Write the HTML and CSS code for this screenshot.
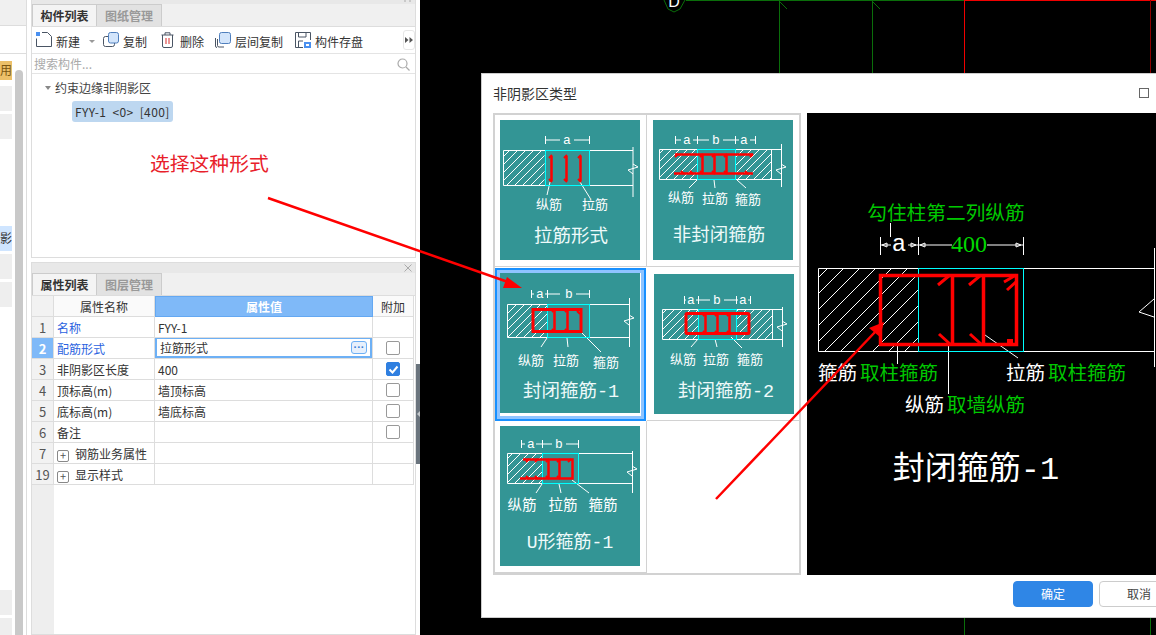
FILE: index.html
```html
<!DOCTYPE html>
<html lang="zh-CN">
<head>
<meta charset="utf-8">
<title>非阴影区类型</title>
<link rel="stylesheet" href="styles.css">
</head>
<body>
<aside class="side">
  <div class="side-head"></div>
  <div class="side-sub"></div>
  <div class="side-main">
    <div class="side-list">
      <div class="side-row side-orange"><span>用</span></div>
      <div class="side-row side-gray"></div>
      <div class="side-row side-gray"></div>
      <div class="side-row"></div>
      <div class="side-row"></div>
      <div class="side-row"></div>
      <div class="side-row side-blue"><span>影</span></div>
      <div class="side-row side-gray"></div>
      <div class="side-row side-gray"></div>
      <div class="side-spacer"></div>
      <div class="side-row side-gray"></div>
      <div class="side-row side-gray"></div>
    </div>
    <div class="side-scroll"></div>
  </div>
</aside>

<div class="panels">
  <section class="panel panel-list">
    <div class="strip strip-thin"><svg class="strip-pin" width="8" height="4" viewBox="0 0 8 4"><path class="strip-mark" d="M1 0V2M6 0V2"/></svg></div>
    <div class="tabs">
      <div class="tab tab-on">构件列表</div>
      <div class="tab">图纸管理</div>
    </div>
    <div class="toolbar">
      <div class="tool tool-new">
        <svg class="ic" width="16" height="16" viewBox="0 0 16 16"><rect class="ic-blue" x="0" y="0" width="4" height="4"/><path class="ic-line" d="M.5 6.5V14.500H15.500V4.500L11.500.5H6"/></svg>
        <span>新建</span><i class="caret"></i>
      </div>
      <div class="tool tool-copy">
        <svg class="ic" width="16" height="16" viewBox="0 0 16 16"><rect class="ic-line" x=".5" y="4.500" width="11" height="10" rx="2"/><rect class="ic-front" x="5.500" y=".5" width="10" height="10.500" rx="2"/></svg>
        <span>复制</span>
      </div>
      <div class="tool tool-del">
        <svg class="ic" width="13" height="16" viewBox="0 0 13 16"><path class="ic-line" d="M.5 3H12.500M4 3V.8H9V3M1.500 3V14a1.500 1.500 0 0 0 1.500 1.500H10A1.500 1.500 0 0 0 11.500 14V3"/><path class="ic-red" d="M5 6V12M8 6V12"/></svg>
        <span>删除</span>
      </div>
      <div class="tool tool-floor">
        <svg class="ic" width="16" height="16" viewBox="0 0 16 16"><path class="ic-line" d="M2.500 7V13.500A1.500 1.500 0 0 0 4 15H9M.5 6V14A1.500 1.500 0 0 0 2 15.500"/><rect class="ic-front" x="4.500" y=".5" width="11" height="11" rx="2"/></svg>
        <span>层间复制</span>
      </div>
      <div class="tool tool-save">
        <svg class="ic" width="16" height="16" viewBox="0 0 16 16"><path class="ic-line" d="M8 15.500H.5V.5H15.500V8M3.500 1V5H11V1M3.500 15V9H8"/><rect class="ic-blue" x="9" y="10" width="7" height="6"/><rect class="ic-white" x="11" y="12" width="3" height="2"/></svg>
        <span>构件存盘</span>
      </div>
      <div class="tool-more"><svg width="8" height="6" viewBox="0 0 8 6"><path class="more-tri" d="M0 0L3.500 3L0 6ZM4.500 0L8 3L4.500 6Z"/></svg></div>
    </div>
    <div class="search">
      <span>搜索构件...</span>
      <svg width="13" height="13" viewBox="0 0 13 13"><circle class="ic-search" cx="5.500" cy="5.500" r="4.500"/><path class="ic-search" d="M9 9L12.500 12.500"/></svg>
    </div>
    <div class="tree">
      <div class="tree-root"><i class="tree-arrow"></i>约束边缘非阴影区</div>
      <div class="tree-leaf">FYY-1 &lt;0&gt; [400]</div>
    </div>
  </section>

  <section class="panel panel-props">
    <div class="strip"><svg class="strip-x" width="8" height="8" viewBox="0 0 8 8"><path class="strip-mark" d="M.5 .5L7.500 7.500M7.500 .5L.5 7.500"/></svg></div>
    <div class="tabs">
      <div class="tab tab-on">属性列表</div>
      <div class="tab">图层管理</div>
    </div>
    <div class="grid-wrap">
      <table class="props">
        <colgroup><col class="c-n"><col class="c-name"><col class="c-val"><col class="c-add"></colgroup>
        <thead>
          <tr><th class="th-n"></th><th>属性名称</th><th class="th-on">属性值</th><th>附加</th></tr>
        </thead>
        <tbody>
          <tr><td class="n">1</td><td class="key">名称</td><td>FYY-1</td><td></td></tr>
          <tr><td class="n n-on">2</td><td class="key">配筋形式</td><td class="edit"><div class="edit-box"><span>拉筋形式</span><b class="more">···</b></div></td><td class="ck"><i class="box"></i></td></tr>
          <tr><td class="n">3</td><td>非阴影区长度</td><td>400</td><td class="ck"><i class="box box-on"><svg width="13" height="13" viewBox="0 0 13 13"><path class="tick" d="M2.500 6.500L5.500 9.500L10.500 3.500"/></svg></i></td></tr>
          <tr><td class="n">4</td><td>顶标高(m)</td><td>墙顶标高</td><td class="ck"><i class="box"></i></td></tr>
          <tr><td class="n">5</td><td>底标高(m)</td><td>墙底标高</td><td class="ck"><i class="box"></i></td></tr>
          <tr><td class="n">6</td><td>备注</td><td></td><td class="ck"><i class="box"></i></td></tr>
          <tr><td class="n">7</td><td><i class="plus">+</i>钢筋业务属性</td><td></td><td></td></tr>
          <tr><td class="n">19</td><td><i class="plus">+</i>显示样式</td><td></td><td></td></tr>
        </tbody>
      </table>
    </div>
  </section>
  <div class="splitter"><i></i></div>
</div>

<main class="canvas">
  <svg class="cad" width="736" height="635" viewBox="420 0 736 635">
    <path class="g" d="M686 .5H965M779.500 0V73M872.500 0V73M779 1L787 9M872 1L880 9M964.500 618V635M1150.500 618V635"/>
    <path class="g" d="M664 0L668 9L674 12L680 9L685 0"/>
    <path class="rl" d="M965 .5H1156M964.500 0V73"/>
    <path class="drl" d="M1150.500 0V73"/>
    <text class="cad-d" x="674" y="7" text-anchor="middle">D</text>
  </svg>

  <div class="dialog">
    <header class="dlg-head"><span>非阴影区类型</span><i class="dlg-max"></i></header>
    <div class="dlg-body">
      <div class="types">
        <div class="type">
          <svg class="thumb" width="140" height="140" viewBox="0 0 140 140">
            <defs><pattern id="h1" width="8" height="8" patternUnits="userSpaceOnUse"><path class="w" d="M0 8L8 0M-1 1L1-1M7 9L9 7"/></pattern></defs>
            <rect x="3.500" y="30.500" width="41" height="35" fill="url(#h1)"/>
            <path class="w" d="M3.500 30.500H133M3.500 65.500H133M3.500 30.500V65.500M133 27V77M133 44L138 47L128 50L133 54"/>
            <path class="w" d="M45.500 16V24M89.500 16V24M46 20H60M74 20H89M50 62L47 75M80 62L90 78"/>
            <rect class="c" x="45.500" y="30.500" width="44" height="35"/>
            <path class="r" d="M51.500 36V61M66.500 36V61M80.500 36V61"/>
            <path class="r2" d="M49 38L52 35M64 38L67 35M78 38L81 35M49 59L52 62M64 59L67 62M78 59L81 62"/>
            <text class="t-d" x="67" y="20">a</text>
            <text class="t-l" x="49" y="85">纵筋</text>
            <text class="t-l" x="95" y="85">拉筋</text>
            <text class="t-t" x="71" y="117">拉筋形式</text>
          </svg>
        </div>
        <div class="type">
          <svg class="thumb" width="140" height="140" viewBox="0 0 140 140">
            <defs><pattern id="h2" width="8" height="8" patternUnits="userSpaceOnUse"><path class="w" d="M0 8L8 0M-1 1L1-1M7 9L9 7"/></pattern></defs>
            <rect x="6.500" y="29.500" width="38" height="30" fill="url(#h2)"/>
            <rect x="82.500" y="29.500" width="36" height="30" fill="url(#h2)"/>
            <path class="w" d="M6.500 29.500H128M6.500 59.500H128M6.500 29.500V59.500M118.500 29.500V59.500M128.500 24V67M128 44L133 47L123 50L128 54"/>
            <path class="w" d="M22.500 16V24M44.500 16V24M82.500 16V24M102.500 16V24M23 20H28M40 20H56M70 20H86M97 20H102M44 60L36 68M61 60L62 68M84 60L93 68"/>
            <rect class="c" x="44.500" y="29.500" width="38" height="30"/>
            <path class="r" d="M22 34.500H100M21 53.500H100M49.500 34V54M61.500 34V54M73.500 34V54"/>
            <path class="r2" d="M22 37L25 34M47 37L50 34M59 37L62 34M71 37L74 34M28 51L31 54M37 51L40 54M47 51L50 54M59 51L62 54M71 51L74 54M92 51L95 54M97 37L100 34"/>
            <text class="t-d" x="34" y="20">a</text><text class="t-d" x="63" y="20">b</text><text class="t-d" x="91" y="20">a</text>
            <text class="t-l" x="28" y="78">纵筋</text>
            <text class="t-l" x="62" y="79">拉筋</text>
            <text class="t-l" x="95" y="80">箍筋</text>
            <text class="t-t" x="66" y="116">非封闭箍筋</text>
          </svg>
        </div>
        <div class="type type-on">
          <svg class="thumb" width="140" height="140" viewBox="0 0 140 140">
            <defs><pattern id="h3" width="8" height="8" patternUnits="userSpaceOnUse"><path class="w" d="M0 8L8 0M-1 1L1-1M7 9L9 7"/></pattern></defs>
            <rect x="7.500" y="31.500" width="40" height="33" fill="url(#h3)"/>
            <path class="w" d="M7.500 31.500H129M7.500 64.500H129M7.500 31.500V64.500M129.500 25V74M129 42L134 45L124 48L129 52"/>
            <path class="w" d="M31.500 17V25M47.500 17V25M89.500 17V25M32 21H34M45 21H60M76 21H89M47 65L41 74M67 65L68 74M82 60L101 79"/>
            <rect class="c" x="47.500" y="31.500" width="42" height="33"/>
            <rect class="r3" x="33" y="36.500" width="48" height="22"/>
            <path class="r" d="M54.500 37V59M67.500 37V59"/>
            <path class="r2" d="M52 39L55 36M65 39L68 36M77 38L80 41M52 56L55 59M65 56L68 59"/>
            <text class="t-d" x="40" y="21">a</text><text class="t-d" x="69" y="21">b</text>
            <text class="t-l" x="31" y="88">纵筋</text>
            <text class="t-l" x="66" y="88">拉筋</text>
            <text class="t-l" x="106" y="90">箍筋</text>
            <text class="t-t" x="71" y="119">封闭箍筋-1</text>
          </svg>
        </div>
        <div class="type type-alt">
          <svg class="thumb" width="140" height="140" viewBox="0 0 140 140">
            <defs><pattern id="h4" width="8" height="8" patternUnits="userSpaceOnUse"><path class="w" d="M0 8L8 0M-1 1L1-1M7 9L9 7"/></pattern></defs>
            <rect x="8.500" y="35.500" width="36" height="30" fill="url(#h4)"/>
            <rect x="82.500" y="35.500" width="36" height="30" fill="url(#h4)"/>
            <path class="w" d="M8.500 35.500H128M8.500 65.500H128M8.500 35.500V65.500M118.500 35.500V65.500M128.500 33V73M128 47L133 50L123 53L128 57"/>
            <path class="w" d="M30.500 22V30M44.500 22V30M82.500 22V30M96.500 22V30M31 26H32M42 26H56M70 26H84M94 26H96M44 65L37 73M61 65L63 73M77 63L88 74"/>
            <rect class="c" x="44.500" y="35.500" width="38" height="30"/>
            <rect class="r3" x="32" y="39.500" width="63" height="20" rx="1"/>
            <path class="r" d="M51.500 40V60M63.500 40V60M75.500 40V60"/>
            <path class="r2" d="M49 42L52 39M61 42L64 39M73 42L76 39M49 57L52 60M61 57L64 60M73 57L76 60"/>
            <text class="t-d" x="37" y="26">a</text><text class="t-d" x="63" y="26">b</text><text class="t-d" x="89" y="26">a</text>
            <text class="t-l" x="29" y="86">纵筋</text>
            <text class="t-l" x="62" y="86">拉筋</text>
            <text class="t-l" x="96" y="86">箍筋</text>
            <text class="t-t" x="72" y="118">封闭箍筋-2</text>
          </svg>
        </div>
        <div class="type">
          <svg class="thumb" width="140" height="140" viewBox="0 0 140 140">
            <defs><pattern id="h5" width="8" height="8" patternUnits="userSpaceOnUse"><path class="w" d="M0 8L8 0M-1 1L1-1M7 9L9 7"/></pattern></defs>
            <rect x="7.500" y="27.500" width="35" height="30" fill="url(#h5)"/>
            <path class="w" d="M7.500 27.500H132M7.500 57.500H132M7.500 27.500V57.500M132.500 25V67M132 40L137 43L127 46L132 50"/>
            <path class="w" d="M21.500 14V22M42.500 14V22M78.500 14V22M22 18H25M36 18H52M66 18H78M42 58L36 67M59 58L61 67M72 54L89 67"/>
            <rect class="c" x="42.500" y="27.500" width="36" height="30"/>
            <path class="r" d="M23 33.500H72.500V52.500H20M48.500 33V53M59.500 33V53"/>
            <path class="r2" d="M26 36L29 33M35 36L38 33M46 36L49 33M57 36L60 33M68 36L71 33M26 50L29 53M35 50L38 53M46 50L49 53M57 50L60 53"/>
            <text class="t-d" x="31" y="18">a</text><text class="t-d" x="59" y="18">b</text>
            <text class="t-l t-lg" x="22" y="80">纵筋</text>
            <text class="t-l t-lg" x="63" y="80">拉筋</text>
            <text class="t-l t-lg" x="103" y="80">箍筋</text>
            <text class="t-t t-u" x="70" y="117">U形箍筋-1</text>
          </svg>
        </div>
      </div>
      <div class="preview">
        <svg width="353" height="462" viewBox="0 0 353 462">
          <defs><pattern id="hp" width="16" height="16" patternUnits="userSpaceOnUse"><path class="w" d="M0 16L16 0M-1 1L1-1M15 17L17 15"/></pattern></defs>
          <text class="p-g p-head" x="139" y="102">勾住柱第二列纵筋</text>
          <rect x="11.500" y="155.500" width="100" height="83" fill="url(#hp)"/>
          <path class="w" d="M83.500 110V124M73.500 124V142M111.500 124V142M216.500 124V142M74 132H84M101 132H111M112 132H145M180 132H216"/>
          <path class="w" d="M75 132L80 130V134ZM109 132L104 130V134ZM113 132L118 130V134ZM214 132L209 130V134Z"/>
          <path class="w" d="M11.500 155.500H347M11.500 238.500H347M11.500 155.500V238.500M347.500 135V254M347 186L332 199L347 204"/>
          <path class="w" d="M90.500 232V251M141.500 232V281M178 222L211 245"/>
          <rect class="c" x="111.500" y="155.500" width="105" height="83"/>
          <rect class="r-big" x="73.500" y="162.500" width="136" height="69"/>
          <path class="r-big" d="M145.500 163V231M176.500 163V231"/>
          <path class="r-hook" d="M131 172L143 162M162 172L174 162M197 169L209 162M200 177L210 168M132 221L143 231M163 221L174 231"/>
          <rect class="r-dot" x="200" y="226" width="6" height="6"/>
          <text class="p-d" x="92" y="131">a</text>
          <text class="p-g p-num" x="162" y="131">400</text>
          <text class="p-w p-st" x="11" y="262">箍筋</text><text class="p-g p-st" x="53" y="262">取柱箍筋</text>
          <text class="p-w p-st" x="199" y="262">拉筋</text><text class="p-g p-st" x="241" y="262">取柱箍筋</text>
          <text class="p-w p-st" x="98" y="294">纵筋</text><text class="p-g p-st" x="140" y="294">取墙纵筋</text>
          <text class="p-w p-big" x="169" y="357">封闭箍筋-1</text>
        </svg>
      </div>
    </div>
    <footer class="dlg-foot">
      <button class="btn btn-ok">确定</button>
      <button class="btn">取消</button>
    </footer>
  </div>
</main>

<div class="note">选择这种形式</div>
<svg class="arrows" width="1156" height="635" viewBox="0 0 1156 635">
  <path class="ar" d="M268 198L508 282M716 499L876 331"/>
  <polygon class="ah" points="507,277 522,288 503,288"/>
  <polygon class="ah" points="884,322 869,328 880,337"/>
</svg>
</body>
</html>
```

FILE: styles.css
```css
* { box-sizing: border-box; }
html, body { margin: 0; padding: 0; }
body {
  width: 1156px;
  height: 635px;
  overflow: hidden;
  display: flex;
  position: relative;
  background: #fff;
  color: #333;
  font: 12px/1.2 "Noto Sans CJK SC", "Noto Sans", sans-serif;
}

/* left sliver */
.side {
  width: 27px;
  flex: none;
  display: flex;
  flex-direction: column;
  border-right: 1px solid #ddd;
}
.side-head { height: 26px; background: #f0f0f0; border-bottom: 1px solid #ddd; }
.side-sub { height: 28px; border-bottom: 1px solid #ddd; }
.side-main { flex: 1; display: flex; gap: 3px; min-height: 0; }
.side-list { width: 12px; padding-top: 4px; display: flex; flex-direction: column; gap: 3px; overflow: hidden; }
.side-row { height: 25px; flex: none; display: flex; justify-content: flex-end; align-items: center; overflow: hidden; white-space: nowrap; }
.side-gray { background: #eee; }
.side-orange { background: #ecc069; color: #7a5510; height: 19px; margin: 3px 0; }
.side-blue { background: #cfe5ff; }
.side-spacer { height: 277px; flex: none; }
.side-scroll { width: 8px; margin-top: 16px; background: #c9c9c9; border-radius: 4px 4px 0 0; }

/* panels */
.panels {
  width: 393px;
  flex: none;
  padding: 0 4px;
  display: flex;
  flex-direction: column;
  gap: 4px;
  position: relative;
}
.panel { border: 1px solid #ddd; border-top: 0; display: flex; flex-direction: column; background: #fff; }
.panel-list { height: 258px; }
.panel-props { flex: 1; border-top: 1px solid #ddd; min-height: 0; }
.strip { height: 10px; flex: none; background: #e8e8e8; display: flex; justify-content: flex-end; align-items: center; padding-right: 3px; }
.strip-thin { height: 4px; align-items: flex-start; }
.strip-pin, .strip-x { display: block; }
.strip-mark { fill: none; stroke: #aaa; stroke-width: 1; }
.tabs { height: 23px; flex: none; display: flex; background: #f0f0f0; border-bottom: 1px solid #ddd; }
.tab {
  width: 65px;
  text-align: center;
  line-height: 21px;
  font-weight: 700;
  color: #999;
  background: #e2e2e2;
  border: 1px solid #ccc;
  border-bottom: 0;
  border-left: 0;
}
.tab-on { color: #333; background: #f4f4f4; border-left: 1px solid #ccc; }

.toolbar { height: 27px; flex: none; display: flex; align-items: center; position: relative; border-bottom: 1px solid #e4e4e4; padding: 4px 0 0 4px; }
.tool { display: flex; align-items: center; gap: 4px; }
.ic { flex: none; margin-top: -3px; }
.ic-line { fill: none; stroke: #4a5564; stroke-width: 1; }
.ic-blue { fill: #4a90f0; }
.ic-white { fill: #fff; }
.ic-front { fill: #d3e5fb; stroke: #4f7fbd; }
.ic-red { fill: none; stroke: #d92b2b; }
.ic-search { fill: none; stroke: #aaa; stroke-width: 1.200; }
.caret { width: 0; height: 0; border: 3px solid transparent; border-top: 3px solid #999; border-bottom: 0; margin-left: 5px; }
.tool-new { width: 67px; }
.tool-copy { width: 58px; }
.tool-del { width: 54px; gap: 6px; }
.tool-floor { width: 80px; }
.tool-save { width: 88px; }
.tool-more { position: absolute; right: 0; top: 3px; width: 12px; height: 20px; border: 1px solid #e6e6e6; border-radius: 3px; display: flex; align-items: center; justify-content: center; }
.more-tri { fill: #555; }
.search { height: 20px; flex: none; display: flex; align-items: center; justify-content: space-between; padding: 1px 5px 0 2px; color: #aaa; border-bottom: 1px solid #e4e4e4; }
.tree { flex: 1; padding-top: 5px; }
.tree-root { height: 17px; line-height: 17px; padding-left: 13px; display: flex; align-items: center; gap: 4px; color: #444; }
.tree-arrow { width: 0; height: 0; border: 3px solid transparent; border-top: 4px solid #888; border-bottom: 0; }
.tree-leaf { width: 101px; height: 21px; line-height: 21px; margin: 5px 0 0 40px; padding-left: 3px; border-radius: 3px; background: #bdd7f0; color: #333; white-space: nowrap; word-spacing: 3px; letter-spacing: .4px; }

.grid-wrap { flex: 1; background: linear-gradient(90deg, #eee 0 22px, #fff 22px); }
.props { width: 382px; table-layout: fixed; border-collapse: separate; border-spacing: 0; }
.c-n { width: 22px; }
.c-name { width: 101px; }
.c-val { width: 218px; }
.c-add { width: 41px; }
.props th, .props td {
  height: 21px;
  padding: 2px 0 0 3px;
  border-right: 1px solid #ddd;
  border-bottom: 1px solid #ddd;
  font-weight: 400;
  white-space: nowrap;
  overflow: hidden;
  background: #fff;
}
.props th { text-align: center; padding: 2px 0 0; background: #fafafa; }
.props .th-n { background: #f2f2f2; }
.props .th-on { background: #7fb9f8; color: #fff; font-weight: 700; border: 1px solid #64a8f2; }
.props .n { text-align: center; padding: 1px 0 0; background: #f2f2f2; color: #555; font-size: 13px; }
.props .n-on { background: #7fb9f8; color: #fff; font-weight: 700; }
.props .key { color: #2a62e0; }
.props .ck { padding: 0; text-align: center; }
.props .edit { padding: 0; }
.edit-box { height: 21px; margin-top: -1px; border: 2px solid #6db0f5; display: flex; align-items: center; justify-content: space-between; padding: 1px 3px 0 3px; }
.more { width: 16px; height: 13px; margin-top: -1px; border: 1px solid #6db0f5; border-radius: 3px; background: #e7f0fc; color: #3a7fd5; font: 700 11px/10px "Liberation Sans", sans-serif; text-align: center; }
.box { display: block; width: 14px; height: 14px; margin: 0 auto; border: 1px solid #999; border-radius: 2px; background: #fff; }
.box-on { background: #2f7fe0; border-color: #2f7fe0; }
.box-on svg { display: block; margin: 0 0 0 -.5px; }
.tick { fill: none; stroke: #fff; stroke-width: 2; }
.plus { display: inline-block; width: 12px; height: 12px; margin-right: 6px; border: 1px solid #888; border-radius: 2px; font-style: normal; font-size: 11px; line-height: 9px; text-align: center; color: #555; vertical-align: -1px; }

.splitter { position: absolute; right: 0; top: 364px; width: 4px; height: 100px; background: #6a747d; display: flex; align-items: center; }
.splitter i { width: 0; height: 0; border: 3px solid transparent; border-right: 3px solid #c4c8cc; border-left: 0; margin-left: 1px; }

/* drawing canvas */
.canvas { flex: 1; background: #000; position: relative; overflow: hidden; }
.cad { position: absolute; left: 0; top: 0; }
.g { fill: none; stroke: #0a6e0a; stroke-width: 1; }
.rl { fill: none; stroke: #f00000; stroke-width: 1; }
.drl { fill: none; stroke: #8c0000; stroke-width: 1; }
.cad-d { fill: #fff; font: 16px "Liberation Sans", sans-serif; }

/* dialog */
.dialog {
  position: absolute;
  left: 61px;
  top: 73px;
  width: 680px;
  height: 545px;
  background: #fff;
  border: 1px solid #ccc;
  display: flex;
  flex-direction: column;
  overflow: hidden;
}
.dlg-head { height: 39px; flex: none; display: flex; align-items: center; justify-content: space-between; padding: 0 11px 0 11px; font-size: 14px; color: #333; }
.dlg-max { width: 10px; height: 10px; border: 1px solid #666; margin-top: -2px; }
.dlg-body { height: 462px; flex: none; display: flex; gap: 6px; padding-left: 11px; }
.types {
  width: 308px;
  flex: none;
  border: 2px solid #d2d2d2;
  display: grid;
  grid-template-columns: 152px 152px;
  grid-template-rows: 152px 154px 152px;
}
.type { padding: 5px 0 0 6px; border-bottom: 1px solid #d2d2d2; }
.type:nth-child(odd) { border-right: 1px solid #d2d2d2; padding-left: 5px; }
.type:last-child { padding-top: 5px; }
.type-alt { padding: 7px 0 0 7px; }
.type.type-on { border: 2px solid #1890ff; margin: 1px 1px 0 0; box-shadow: inset 0 0 0 3px #8fc4ff; padding: 3px 0 0 3px; }
.thumb { display: block; background: #339595; }
.w { fill: none; stroke: #fff; stroke-width: 1; }
.c { fill: none; stroke: #00ffff; stroke-width: 1; }
.r { fill: none; stroke: #f00; stroke-width: 2.500; }
.r2 { fill: none; stroke: #f00; stroke-width: 2; }
.r3 { fill: none; stroke: #f00; stroke-width: 3; }
.t-d, .t-l, .t-t { text-anchor: middle; dominant-baseline: central; fill: #fff; font-family: "Liberation Mono", "Noto Sans CJK SC", monospace; }
.t-d { font-size: 13px; }
.t-l { font-size: 13px; }
.t-lg { font-size: 14.500px; }
.t-t { font-size: 18.500px; fill: #eefafa; }
.t-u { font-size: 18px; }

.preview { flex: 1; background: #000; }
.preview svg { display: block; }
.p-g, .p-w, .p-d { dominant-baseline: central; font-family: "Liberation Mono", "Noto Sans CJK SC", monospace; }
.p-g { fill: #00c800; }
.p-w, .p-d { fill: #fff; }
.p-head { font-size: 19.700px; text-anchor: middle; }
.p-d { font-size: 24px; text-anchor: middle; }
.p-num { font-family: "Liberation Serif", serif; font-size: 24px; text-anchor: middle; fill: #00d800; }
.p-st { font-size: 19.500px; }
.p-big { font-size: 32px; text-anchor: middle; }
.r-big { fill: none; stroke: #f00; stroke-width: 3.500; }
.r-hook { fill: none; stroke: #f00; stroke-width: 3; }
.r-dot { fill: #f00; }

.dlg-foot { flex: 1; display: flex; gap: 6px; padding: 6px 0 0 531px; }
.btn { width: 80px; height: 26px; flex: none; border: 1px solid #ccc; border-radius: 4px; background: #fff; color: #444; font: inherit; padding: 0; }
.btn-ok { background: #2f86e6; border-color: #2f86e6; color: #fff; }

/* annotations laid over everything */
.note { position: absolute; left: 150px; top: 150px; font-size: 19.800px; line-height: 26px; color: #e8202a; white-space: nowrap; }
.arrows { position: absolute; left: 0; top: 0; pointer-events: none; }
.ar { fill: none; stroke: #f00; stroke-width: 2.500; }
.ah { fill: #f00; }
```
